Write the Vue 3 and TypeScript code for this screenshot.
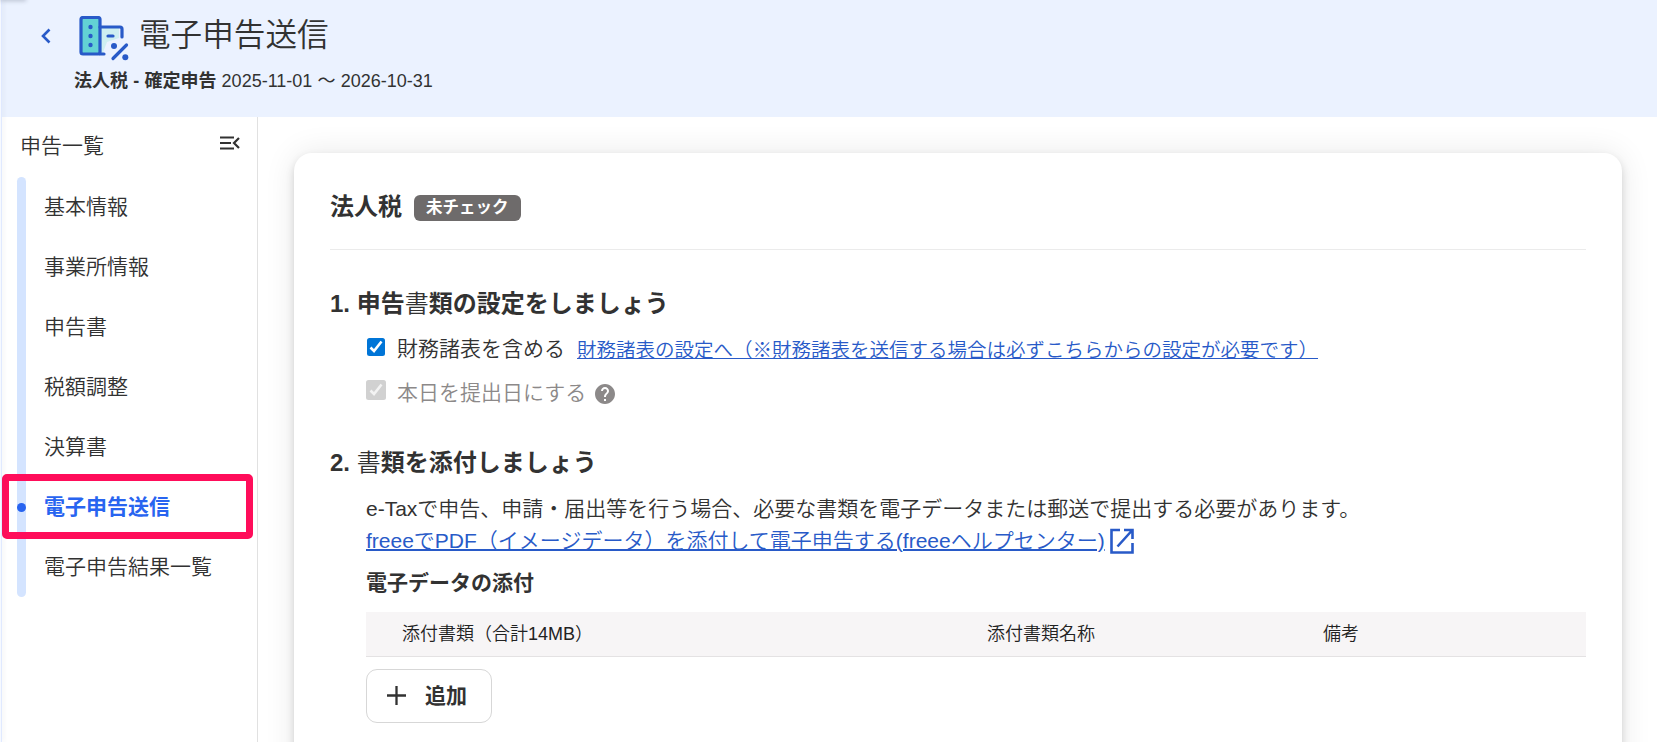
<script setup lang="ts">
interface NavItem { label: string; active?: boolean }
const navItems: NavItem[] = [
  { label: '基本情報' },
  { label: '事業所情報' },
  { label: '申告書' },
  { label: '税額調整' },
  { label: '決算書' },
  { label: '電子申告送信', active: true },
  { label: '電子申告結果一覧' },
]
</script>

<template>
  <div class="page">
    <div class="rail"></div>
    <div class="rail-tip"></div>
    <header class="header">
      <svg class="back" viewBox="0 0 10 16"><path d="M8.500 1.500 2 8l6.500 6.500" fill="none" stroke="#285ac8" stroke-width="2.600" /></svg>
      <div>
        <div class="title-row">
          <svg class="logo" viewBox="0 0 50 46">
            <path d="M22 12h18v10l-12 4-5 13h-3z" fill="#ceeff1" />
            <rect x="2" y="1.5" width="19" height="36.5" rx="2" fill="#63d2d4" stroke="#285ac8" stroke-width="3.200" />
            <g fill="#285ac8"><circle cx="11.5" cy="11" r="2.200" /><circle cx="11.5" cy="20" r="2.200" /><circle cx="11.5" cy="29" r="2.200" /><circle cx="35" cy="30" r="3" /><circle cx="46.300" cy="41.300" r="3" /></g>
            <path d="M21 11h20q2 0 2 2v8M29 20h5M21 38h4M34 42.500 47.500 29" fill="none" stroke="#285ac8" stroke-width="3.200" stroke-linecap="round" />
          </svg>
          <h1 class="title">電子申告送信</h1>
        </div>
        <p class="subtitle"><b>法人税 - 確定申告</b> 2025-11-01 ～ 2026-10-31</p>
      </div>
    </header>

    <div class="body">
      <aside class="sidebar">
        <div class="side-head">
          <span>申告一覧</span>
          <svg class="collapse" viewBox="0 0 20 14"><path d="M0 1.500h14M0 7h11M0 12.500h14M19 2l-5 5 5 5" fill="none" stroke="#323232" stroke-width="2.200" /></svg>
        </div>
        <nav class="nav">
          <a v-for="item in navItems" :key="item.label" class="nav-item" :class="{ active: item.active }">{{ item.label }}</a>
        </nav>
      </aside>

      <main class="main">
        <section class="card">
          <div class="card-head">
            <h2>法人税</h2><span class="badge">未チェック</span>
          </div>

          <h3 class="step first">1. 申告<span class="thin">書</span>類の設定をしましょう</h3>
          <div class="check-row">
            <svg class="box" viewBox="0 0 20 20"><rect x="1" y="1" width="18" height="18" rx="2.500" fill="#0075d7" /><path d="m4.500 10.500 3.500 3.500 7.500-9.500" fill="none" stroke="#fff" stroke-width="2.600" /></svg>
            <span class="check-label">財務諸表を含める</span>
            <a class="settings-link">財務諸表の設定へ（※財務諸表を送信する場合は必ずこちらからの設定が必要です）</a>
          </div>
          <div class="check-row disabled">
            <svg class="box" viewBox="0 0 20 20"><rect width="20" height="20" rx="2.500" fill="#d1d1d1" /><path d="m4.500 10.500 3.500 3.500 7.500-9.500" fill="none" stroke="#f3f3f3" stroke-width="2.600" /></svg>
            <span class="check-label">本日を提出日にする</span>
            <svg class="help" viewBox="2 2 20 20"><path fill="#8c8989" d="M12 2C6.480 2 2 6.480 2 12s4.480 10 10 10 10-4.480 10-10S17.520 2 12 2zm1 17h-2v-2h2v2zm2.070-7.750-.9.920C13.450 12.900 13 13.500 13 15h-2v-.5c0-1.100.45-2.100 1.170-2.830l1.240-1.260c.37-.36.59-.86.59-1.410 0-1.100-.9-2-2-2s-2 .9-2 2H8c0-2.210 1.790-4 4-4s4 1.790 4 4c0 .88-.36 1.680-.93 2.250z" /></svg>
          </div>

          <h3 class="step second">2. <span class="thin">書</span>類を添付しましょう</h3>
          <div class="section">
            <p class="desc">e-Taxで申告、申請・届出等を行う場合、必要な書類を電子データまたは郵送で提出する必要があります。</p>
            <p class="help-line"><a>freeeでPDF（イメージデータ）を添付して電子申告する(freeeヘルプセンター)</a>
              <svg class="ext" viewBox="0 0 24 28"><path d="M10 3H1.500v22.500h21V16M14 3h8.500V12M21.500 4 7.500 19.500" fill="none" stroke="#285ac8" stroke-width="2.600" /></svg>
            </p>
            <h4>電子データの添付</h4>
            <div class="table-head">
              <span>添付書類（合計14MB）</span><span>添付書類名称</span><span>備考</span>
            </div>
            <button class="add">
              <svg viewBox="0 0 19 19"><path d="M9.500 0v19M0 9.500h19" stroke="#323232" stroke-width="2.300" /></svg>追加
            </button>
          </div>
        </section>
      </main>
    </div>
  </div>
</template>

<style>
html, body { overflow: hidden; }
</style>

<style scoped>
*, *::before, *::after { box-sizing: border-box; margin: 0; }
.page { position: relative; width: 1657px; height: 742px; overflow: hidden; background: #fff; color: #323232; font: 21px/30px "Liberation Sans", "Noto Sans CJK JP", sans-serif; white-space: nowrap; }
.rail { position: absolute; z-index: 2; left: 0; top: 0; width: 2px; height: 742px; background: #e0e9ff; border-left: 1px solid #f6f9ff; box-shadow: 1px 0 5px rgba(60, 70, 90, .1); }
.rail-tip { position: absolute; z-index: 2; left: 0; top: -4px; width: 26px; height: 4px; box-shadow: 0 1px 4px rgba(60, 70, 90, .3); }
.header { display: flex; height: 117px; background: #ebf2ff; padding-left: 41px; }
.back { width: 10px; height: 16px; margin: 28px 23px 0 0; }
.title-row { display: flex; height: 70px; padding-left: 4px; }
.logo { width: 50px; height: 46px; margin: 16px 10px 0 1px; }
.title { font-size: 31.600px; line-height: 46px; font-weight: 350; padding-top: 12px; }
.subtitle { font-size: 18px; line-height: 24px; margin-top: -1px; word-spacing: .2px; }
.body { display: flex; height: 625px; }
.sidebar { width: 258px; border-right: 1px solid #e1e1e1; padding-left: 17px; font-weight: 350; }
.side-head { display: flex; justify-content: space-between; align-items: flex-start; padding: 14px 17px 0 3px; height: 60px; }
.collapse { width: 20px; height: 14px; margin-top: 5px; }
.nav { position: relative; height: 420px; width: 9px; border-radius: 5px; background: #d4e4ff; }
.nav-item { display: flex; align-items: center; height: 60px; width: 220px; padding: 0 0 1px 27px; }
.nav-item.active { position: relative; color: #2864f0; font-weight: 700; }
.nav-item.active::before { content: ""; position: absolute; left: 0; top: 26px; width: 9px; height: 9px; border-radius: 50%; background: #2864f0; }
.nav-item.active::after { content: ""; position: absolute; left: -15px; top: -3px; width: 251px; height: 65px; border: 7px solid #ff0d5a; border-radius: 5px; }
.main { flex: 1; padding: 36px 35px 0 36px; overflow: hidden; }
.card { height: 700px; border-radius: 18px; background: #fff; padding: 0 36px; box-shadow: 0 0 32px rgba(0, 0, 0, .09), 0 4px 8px rgba(0, 0, 0, .15); }
.card-head { display: flex; height: 97px; border-bottom: 1px solid #ebebeb; padding-top: 36px; }
h2 { font-size: 24px; line-height: 36px; }
.badge { height: 26px; margin: 6px 0 0 12px; padding: 0 12px; border-radius: 6px; background: #6e6b6b; color: #fff; font-size: 16.500px; line-height: 25px; font-weight: 700; }
.step { font-size: 24px; line-height: 36px; }
.first { margin-top: 36px; }
.second { margin-top: 35px; }
.thin { font-weight: 350; }
.check-row { display: flex; height: 44px; padding: 14px 0 0 36px; font-weight: 350; }
.box { width: 20px; height: 20px; margin: 1px 11px 0 0; }
.check-label { line-height: 26px; }
.settings-link { color: #285ac8; text-decoration: underline; font-size: 19.500px; line-height: 28px; margin-left: 12px; }
.disabled { color: #8c8989; }
.disabled .box { margin-top: 0; }
.help { width: 20px; height: 20px; margin: 4px 0 0 9px; }
.section { padding-left: 36px; }
.desc { line-height: 32px; margin-top: 12px; font-weight: 350; }
.help-line { display: flex; line-height: 32px; color: #285ac8; font-weight: 350; }
.help-line a { text-decoration: underline; text-decoration-thickness: 2px; }
.ext { width: 24px; height: 28px; margin: 2px 0 0 5px; }
h4 { font-size: 21px; line-height: 32px; margin-top: 10px; }
.table-head { display: grid; grid-template-columns: 585px 336px 1fr; height: 45px; margin-top: 13px; padding-left: 36px; background: #f7f5f6; border-bottom: 1px solid #e4e2e3; font-size: 18px; line-height: 44px; color: #222; font-weight: 350; }
.add { display: flex; align-items: center; gap: 19px; width: 126px; height: 54px; margin-top: 12px; padding: 0 0 1px 20px; border: 1px solid #d7d7d7; border-radius: 11px; background: #fff; color: #323232; font: 700 21px/30px "Liberation Sans", "Noto Sans CJK JP", sans-serif; }
.add svg { width: 19px; height: 19px; }
</style>
